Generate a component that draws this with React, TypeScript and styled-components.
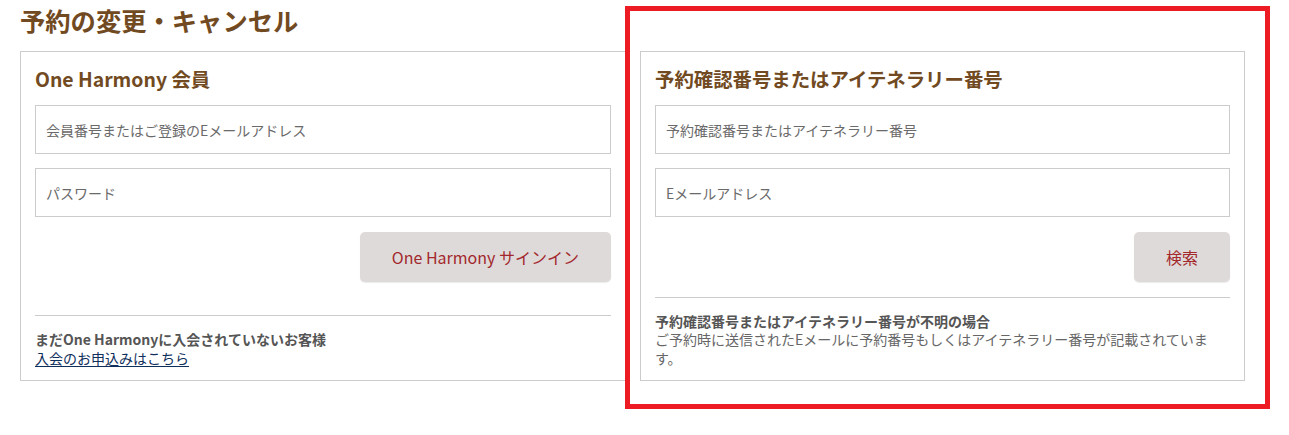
import React from "react";
import styled, { createGlobalStyle } from "styled-components";

const Global = createGlobalStyle`
  html, body { margin: 0; padding: 0; background: #fff; }
  body { font-family: "Noto Sans CJK JP", "Noto Sans", sans-serif; color: #555; }
  * { box-sizing: border-box; }
`;

const Page = styled.div`
  position: relative;
  width: 1289px;
  height: 435px;
  padding: 3px 0 0 20px;
`;

const Heading = styled.h1`
  margin: 0 0 14px;
  font-size: 25.3px;
  line-height: 34px;
  font-weight: 700;
  color: #714a22;
`;

const Columns = styled.div`
  display: grid;
  grid-template-columns: 607px 605px;
  column-gap: 13px;
  align-items: stretch;
`;

const Card = styled.section<{ $padRight?: number }>`
  display: flex;
  flex-direction: column;
  border: 1px solid #cccccc;
  padding: 15px ${(p) => p.$padRight ?? 14}px 13px 14px;
  min-height: 330px;
`;

const CardTitle = styled.h2`
  margin: 0 0 14px;
  font-size: 19.4px;
  line-height: 24px;
  font-weight: 700;
  color: #714a22;
`;

const Field = styled.input`
  display: block;
  width: 100%;
  height: 49px;
  margin: 0 0 14px;
  padding: 0 10px;
  border: 1px solid #cccccc;
  border-radius: 0;
  font-family: inherit;
  font-size: 14px;
  color: #333;
  background: #fff;
  outline: none;
  &::placeholder { color: #6a6a6a; opacity: 1; }
`;

const ButtonRow = styled.div`
  display: flex;
  justify-content: flex-end;
  margin-top: 1px;
`;

const Button = styled.button`
  height: 50px;
  padding: 0 32px;
  border: none;
  border-radius: 5px;
  background: #dedad9;
  box-shadow: 0 1px 1px rgba(0, 0, 0, 0.08);
  color: #a3282d;
  font-family: inherit;
  font-size: 16px;
  cursor: pointer;
`;

const Footer = styled.div`
  margin-top: auto;
  border-top: 1px solid #cccccc;
  padding-top: 14px;
  font-size: 14px;
  line-height: 18.5px;
  color: #666;
`;

const FooterLead = styled.div`
  font-weight: 700;
  color: #555;
`;

const FooterLink = styled.a`
  color: #0f2f5c;
  text-decoration: underline;
  text-underline-offset: 2px;
`;

const Spacer = styled.div`
  height: 13px;
`;

const Highlight = styled.div`
  position: absolute;
  left: 625px;
  top: 6px;
  width: 645px;
  height: 403px;
  border: 5px solid #ed1c24;
  pointer-events: none;
`;

export default function App() {
  return (
    <>
      <Global />
      <Page>
        <Heading>予約の変更・キャンセル</Heading>
        <Columns>
          <Card $padRight={15}>
            <CardTitle>One Harmony 会員</CardTitle>
            <Field placeholder="会員番号またはご登録のEメールアドレス" />
            <Field type="password" placeholder="パスワード" />
            <ButtonRow>
              <Button>One Harmony サインイン</Button>
            </ButtonRow>
            <Spacer />
            <Footer>
              <FooterLead>まだOne Harmonyに入会されていないお客様</FooterLead>
              <FooterLink href="#">入会のお申込みはこちら</FooterLink>
            </Footer>
          </Card>
          <Card>
            <CardTitle>予約確認番号またはアイテネラリー番号</CardTitle>
            <Field placeholder="予約確認番号またはアイテネラリー番号" />
            <Field placeholder="Eメールアドレス" />
            <ButtonRow>
              <Button>検索</Button>
            </ButtonRow>
            <Spacer />
            <Footer>
              <FooterLead>予約確認番号またはアイテネラリー番号が不明の場合</FooterLead>
              ご予約時に送信されたEメールに予約番号もしくはアイテネラリー番号が記載されています。
            </Footer>
          </Card>
        </Columns>
        <Highlight />
      </Page>
    </>
  );
}
